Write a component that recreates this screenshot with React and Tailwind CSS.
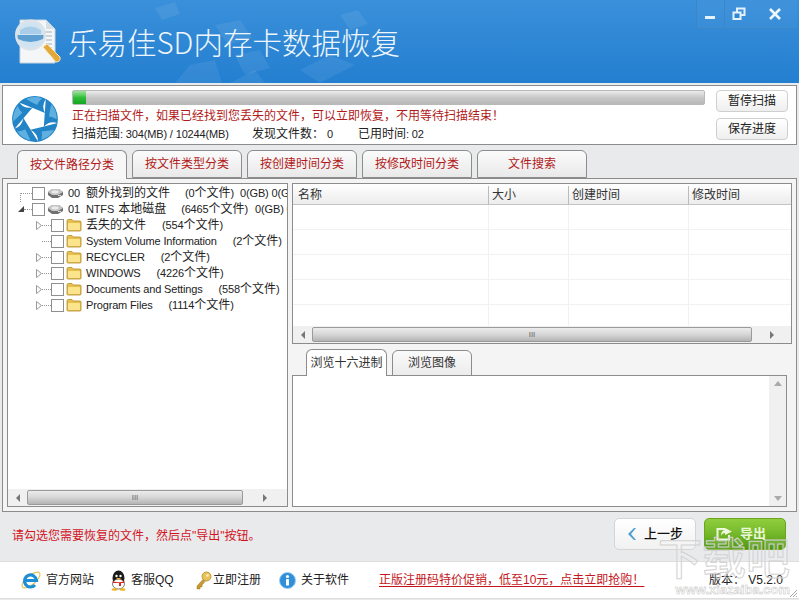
import React from 'react';

const FONT = '"Liberation Sans", "Noto Sans CJK SC", sans-serif';

const tabs = ['按文件路径分类', '按文件类型分类', '按创建时间分类', '按修改时间分类', '文件搜索'];

const folders = [
  { name: <Zh>丢失的文件</Zh>, n: 554, arrow: true },
  { name: 'System Volume Information', n: 2, arrow: false },
  { name: 'RECYCLER', n: 2, arrow: true },
  { name: 'WINDOWS', n: 4226, arrow: true },
  { name: 'Documents and Settings', n: 558, arrow: true },
  { name: 'Program Files', n: 1114, arrow: true },
];

// latin runs in the picture are narrower than the CJK ones, so CJK gets its own size
function Zh({ children }) {
  return <span className="text-[12px] tracking-normal">{children}</span>;
}

const Count = ({ n }) => (
  <span>({n}<Zh>个文件</Zh>)</span>
);

const DriveIcon = () => (
  <svg width="17" height="12" viewBox="0 0 17 12" className="shrink-0">
    <path d="M1 5 L5 2 H12 L16 5 V8 L11 11 H5 L1 8 Z" fill="#6f716f" />
    <path d="M1 5 L5 8 H11 L16 5 L12 2 H5 Z" fill="#c6c7c6" />
    <ellipse cx="8" cy="5" rx="3.5" ry="1.4" fill="#ececec" />
    <rect x="11" y="8" width="3" height="1" fill="#d8d8d8" />
  </svg>
);

const FolderIcon = () => (
  <svg width="16" height="14" viewBox="0 0 16 14" className="shrink-0">
    <path d="M1 3 Q1 1.5 2.5 1.5 H6 L7.5 3 H14 Q15 3 15 4 V12 Q15 13 14 13 H2 Q1 13 1 12 Z" fill="#e8bf4d" stroke="#b08a2a" strokeWidth="0.8" />
    <rect x="2" y="5" width="12" height="7" rx="1" fill="#fbe48c" />
  </svg>
);

const Checkbox = () => <span className="w-[13px] h-[13px] shrink-0 border border-[#8e8f8f] bg-white" />;

const ScrollArrow = ({ dir }) => (
  <svg width="6" height="8" viewBox="0 0 6 8" className={dir === 'left' ? 'rotate-180' : ''}>
    <path d="M1 0 L5 4 L1 8 Z" fill="#777" />
  </svg>
);

const HScrollbar = ({ thumb }) => (
  <div className="flex items-center bg-[#f0f0f0] h-[17px] shrink-0">
    <div className="w-[19px] flex justify-center"><ScrollArrow dir="left" /></div>
    <div className={`${thumb} h-[15px] border border-[#9a9a9a] rounded-[2px] bg-gradient-to-b from-[#ececec] via-[#d6d6d6] to-[#b4b4b4] flex items-center justify-center text-[8px] leading-none text-[#666]`}>
      III
    </div>
    <div className="flex-1 flex justify-center"><ScrollArrow dir="right" /></div>
  </div>
);

const SwirlLogo = () => (
  <svg width="48" height="48" viewBox="-24 -24 48 48">
    {[0, 72, 144, 216, 288].map(a => (
      <g key={a} transform={`rotate(${a})`}>
        <path d="M-16 -16.5 A23 23 0 0 1 11 -20 Q6 -14 10 -6 Q-2 -11 -16 -16.5 Z" fill="#2284c6" />
        <path d="M-9 -20 A21 21 0 0 1 7 -20.5 Q3 -17 2 -14 Q-4 -17 -9 -20 Z" fill="#5fb0e0" />
      </g>
    ))}
  </svg>
);

const Logo = () => (
  <svg width="46" height="46" viewBox="0 0 46 46" className="shrink-0">
    <path d="M5 1 H31 L40 10 V44 H5 Z" fill="#f4f6f8" stroke="#c7d3de" />
    <path d="M31 1 V10 H40 Z" fill="#d6dee6" />
    <path d="M30 13 H37 M31 17 H37 M31 21 H37 M31 25 H37 M31 29 H37" stroke="#a5b0ba" />
    <circle cx="15.5" cy="16" r="14" fill="#cfe4f3" stroke="#dbe3ea" strokeWidth="3" />
    <path d="M2.5 16 H28.5 A13 13 0 0 1 28 20 Q15 26 3 20 A13 13 0 0 1 2.5 16 Z" fill="#5c9fd0" />
    <path d="M5 11 Q15 4 26 11 V15 H5 Z" fill="#a9cde8" />
    <path d="M28 28 L32 25 L45 38 Q46 43 41 43 Z" fill="#e2a83a" stroke="#f6e3ab" />
  </svg>
);

const IeIcon = () => (
  <svg width="20" height="20" viewBox="0 0 20 20">
    <ellipse cx="10" cy="10" rx="11" ry="4.5" transform="rotate(-40 10 10)" fill="none" stroke="#e8c25a" strokeWidth="1.2" />
    <path d="M4.5 10.5 H15.5 A6 6 0 1 0 14 15" fill="none" stroke="#1d8fd6" strokeWidth="3.2" />
  </svg>
);

const QqIcon = () => (
  <svg width="19" height="21" viewBox="0 0 19 21">
    <ellipse cx="9.5" cy="8" rx="6" ry="7.5" fill="#1a1a1a" />
    <ellipse cx="9.5" cy="14" rx="6" ry="5" fill="#fff" stroke="#222" strokeWidth="0.6" />
    <circle cx="7.5" cy="6" r="1.2" fill="#fff" />
    <circle cx="11.5" cy="6" r="1.2" fill="#fff" />
    <path d="M7 8 H12 L9.5 10 Z" fill="#f2b01e" />
    <path d="M3.5 11 Q9.5 13.5 15.5 11 L15 13 H12 V16 H10 V13 H4 Z" fill="#d8281e" />
    <ellipse cx="5.5" cy="19.5" rx="3" ry="1.3" fill="#f2b01e" />
    <ellipse cx="13.5" cy="19.5" rx="3" ry="1.3" fill="#f2b01e" />
  </svg>
);

const KeyIcon = () => (
  <svg width="17" height="19" viewBox="0 0 17 19">
    <circle cx="11.5" cy="5.5" r="4.5" fill="#e8c35a" stroke="#b08a2a" strokeWidth="0.8" />
    <circle cx="12.5" cy="4.5" r="1.2" fill="#fff3c4" />
    <path d="M8 8.5 L2 15 L2 18 L5 18 L5 16 L7 16 L7 14 L10 10.5 Z" fill="#c99a32" stroke="#9a7420" strokeWidth="0.5" />
  </svg>
);

const InfoIcon = () => (
  <svg width="17" height="17" viewBox="0 0 17 17">
    <circle cx="8.5" cy="8.5" r="8" fill="#2f8fd8" stroke="#9fcdee" />
    <circle cx="8.5" cy="4.5" r="1.6" fill="#fff" />
    <rect x="7" y="7" width="3" height="6.5" rx="0.5" fill="#fff" />
  </svg>
);

const FooterLink = ({ icon, label, iconBox, textBox }) => (
  <div className="flex items-center">
    <span className={`${iconBox} flex justify-center`}>{icon}</span>
    <span className={`${textBox} text-[12px] text-[#222]`}>{label}</span>
  </div>
);

const App = () => {
  return (
    <div className="relative w-[799px] h-[600px] overflow-hidden bg-[#e9eaec] flex flex-col" style={{ fontFamily: FONT }}>
      {/* title bar */}
      <header className="relative h-[83px] shrink-0 bg-gradient-to-b from-[#3a90da] to-[#237fd0] flex items-center pl-[15px] overflow-hidden">
        <svg className="absolute left-[130px] top-0" width="300" height="83" viewBox="0 0 300 83">
          <g fill="#fff" fillOpacity="0.07">
            <path d="M25 8 L45 2 L50 14 L32 20 Z" />
            <path d="M85 25 L110 20 L122 38 L98 45 Z" />
            <path d="M210 15 L228 10 L238 24 L220 30 Z" />
            <path d="M60 65 L85 60 L92 83 L45 83 Z" />
            <path d="M105 55 L130 50 L140 68 L115 75 Z" />
            <path d="M100 83 L125 70 L135 83 Z" />
            <path d="M170 70 L200 55 L225 65 L190 83 Z" />
          </g>
        </svg>
        <Logo />
        <h1 className="relative ml-[7px] text-[29.5px] leading-none font-light font-['Noto_Sans_CJK_SC'] text-[#eef6fc]">乐易佳SD内存卡数据恢复</h1>
        <div className="absolute right-[2px] top-0 h-[29px] flex bg-white/[0.03] border-l border-b border-[#3d86c4]">
          <div className="w-[28px] border-r border-[#3d86c4] flex items-center justify-center">
            <span className="w-[10px] h-[3px] mt-[7px] -ml-[2px] bg-[#e6f2fb]" />
          </div>
          <div className="w-[28px] flex items-center justify-center">
            <svg width="14" height="14" viewBox="0 0 14 14" fill="none" stroke="#e6f2fb" strokeWidth="2">
              <rect x="5" y="1.5" width="7.5" height="6.5" />
              <rect x="1.5" y="5.5" width="7" height="6.5" fill="#2f88d4" />
            </svg>
          </div>
          <div className="w-[44px] flex items-center justify-center">
            <svg width="12" height="12" viewBox="0 0 12 12" stroke="#eef6fc" strokeWidth="2.6">
              <path d="M1 1 L11 11 M11 1 L1 11" />
            </svg>
          </div>
        </div>
      </header>

      {/* scan status */}
      <section className="mt-[2px] mx-[2px] h-[60px] shrink-0 border border-[#8c8c8c] bg-white flex">
        <div className="w-[69px] shrink-0 pl-[8px] pt-[9px]">
          <SwirlLogo />
        </div>
        <div className="w-[633px] pt-[4px]">
          <div className="h-[15px] border border-[#b9b9b9] rounded-[2px] bg-gradient-to-b from-[#ececec] via-[#c8c8c8] to-[#b8b8b8] overflow-hidden">
            <div className="w-[13px] h-full bg-gradient-to-b from-[#9ae59a] via-[#2fbf3a] to-[#12a51e]" />
          </div>
          <p className="mt-[3px] text-[12px] leading-[17px] text-[#b11a1a]">正在扫描文件，如果已经找到您丢失的文件，可以立即恢复，不用等待扫描结束！</p>
          <div className="mt-[1px] flex text-[11px] tracking-[-0.15px] leading-[17px] text-[#222]">
            <span className="w-[180px]"><Zh>扫描范围</Zh>: 304(MB) / 10244(MB)</span>
            <span className="w-[106px]"><Zh>发现文件数：</Zh> 0</span>
            <span><Zh>已用时间</Zh>: 02</span>
          </div>
        </div>
        <div className="ml-[11px] pt-[4px] flex flex-col gap-[6px]">
          <button className="w-[72px] h-[22px] border border-[#cfcfcf] rounded-[4px] bg-gradient-to-b from-white to-[#efefef] text-[12px] text-[#222]">暂停扫描</button>
          <button className="w-[72px] h-[22px] border border-[#cfcfcf] rounded-[4px] bg-gradient-to-b from-white to-[#efefef] text-[12px] text-[#222]">保存进度</button>
        </div>
      </section>

      {/* category tabs */}
      <nav className="mt-[5px] pl-[17px] h-[29px] shrink-0 flex gap-[5px] relative z-10">
        {tabs.map((tab, i) => (
          <div
            key={tab}
            className={`w-[110px] border border-[#8c8c8c] rounded-t-[6px] flex items-center justify-center text-[12px] text-[#b11a1a] ${
              i === 0 ? 'h-[29px] border-b-0 bg-[#f7f7f7]' : 'h-[28px] bg-gradient-to-b from-[#fbfbfb] to-[#e9e9e9]'
            }`}
          >
            {tab}
          </div>
        ))}
      </nav>

      {/* main panel */}
      <main className="mx-[2px] -mt-[1px] h-[334px] shrink-0 border border-[#8c8c8c] bg-[#f4f4f4] p-[4px] flex gap-[4px]">
        {/* tree */}
        <div className="w-[281px] shrink-0 border border-[#8c8c8c] bg-white flex flex-col">
          <div className="flex-1 pt-[1px] overflow-hidden text-[11px] tracking-[-0.15px] text-[#222] whitespace-nowrap">
            <div className="h-[16px] w-max flex items-center pl-[12px]">
              <span className="w-[12px] h-[9px] mt-[9px] border-l border-t border-dotted border-[#999] shrink-0" />
              <Checkbox />
              <span className="ml-[2px]"><DriveIcon /></span>
              <span className="ml-[4px] w-[18px]">00</span>
              <span><Zh>额外找到的文件</Zh></span>
              <span className="ml-[15px]"><Count n={0} /></span>
              <span className="ml-[6px]">0(GB) 0(G</span>
            </div>
            <div className="h-[16px] w-max flex items-center pl-[10px]">
              <svg width="6" height="6" viewBox="0 0 6 6" className="shrink-0"><path d="M0 6 L6 0 V6 Z" fill="#444" /></svg>
              <span className="w-[8px] border-t border-dotted border-[#999] shrink-0" />
              <Checkbox />
              <span className="ml-[2px]"><DriveIcon /></span>
              <span className="ml-[4px] w-[18px]">01</span>
              <span>NTFS</span>
              <span className="ml-[4px]"><Zh>本地磁盘</Zh></span>
              <span className="ml-[15px]"><Count n={6465} /></span>
              <span className="ml-[7px]">0(GB) 0</span>
            </div>
            {folders.map((f, i) => (
              <div key={i} className="h-[16px] w-max flex items-center pl-[28px]">
                <span className="w-[15px] shrink-0 flex items-center">
                  {f.arrow ? (
                    <svg width="6" height="9" viewBox="0 0 6 9" className="shrink-0"><path d="M0.5 0.5 L5.5 4.5 L0.5 8.5 Z" fill="#fff" stroke="#999" /></svg>
                  ) : (
                    <span className="w-[6px]" />
                  )}
                  <span className="w-[9px] border-t border-dotted border-[#999]" />
                </span>
                <Checkbox />
                <span className="ml-[2px]"><FolderIcon /></span>
                <span className="ml-[4px]">{f.name}</span>
                <span className="ml-[16px]"><Count n={f.n} /></span>
              </div>
            ))}
          </div>
          <HScrollbar thumb="w-[216px]" />
        </div>

        {/* file list + preview */}
        <div className="flex-1 flex flex-col min-w-0">
          <div className="h-[161px] shrink-0 border border-[#8c8c8c] bg-white flex flex-col">
            <div className="h-[21px] shrink-0 pt-[1px] flex text-[12px] text-[#333] bg-gradient-to-b from-white to-[#ececec] border-b border-[#c4c4c4] items-center">
              <div className="w-[196px] pl-[5px] border-r border-[#bbb]">名称</div>
              <div className="w-[80px] pl-[3px] border-r border-[#bbb]">大小</div>
              <div className="w-[120px] pl-[3px] border-r border-[#bbb]">创建时间</div>
              <div className="flex-1 pl-[3px]">修改时间</div>
            </div>
            <div className="flex-1 flex flex-col">
              {[0, 1, 2, 3, 4].map(row => (
                <div key={row} className={`flex ${row === 4 ? 'flex-1' : 'h-[25px] border-b border-[#f1f1f1]'}`}>
                  <div className="w-[196px] border-r border-[#f1f1f1]" />
                  <div className="w-[80px] border-r border-[#f1f1f1]" />
                  <div className="w-[120px] border-r border-[#f1f1f1]" />
                </div>
              ))}
            </div>
            <HScrollbar thumb="w-[440px]" />
          </div>

          <div className="h-[31px] shrink-0 pl-[14px] flex items-end gap-[5px] relative z-10">
            <div className="w-[81px] h-[27px] border border-[#8c8c8c] border-b-0 rounded-t-[6px] bg-white flex items-center justify-center text-[12px] text-[#333] -mb-[1px]">浏览十六进制</div>
            <div className="w-[80px] h-[26px] border border-[#8c8c8c] rounded-t-[6px] bg-gradient-to-b from-[#fafafa] to-[#ececec] flex items-center justify-center text-[12px] text-[#333] -mb-[1px]">浏览图像</div>
          </div>

          <div className="flex-1 mr-[5px] border border-[#8c8c8c] bg-white flex justify-end">
            <div className="w-[17px] bg-[#f0f0f0] flex flex-col items-center justify-between py-[5px]">
              <svg width="8" height="5" viewBox="0 0 8 5"><path d="M0 5 L4 0 L8 5 Z" fill="#aaa" /></svg>
              <svg width="8" height="5" viewBox="0 0 8 5"><path d="M0 0 L4 5 L8 0 Z" fill="#aaa" /></svg>
            </div>
          </div>
        </div>
      </main>

      {/* action row */}
      <div className="h-[49px] shrink-0 flex items-start pt-[6px] pl-[12px] pr-[13px]">
        <p className="flex-1 mt-[9px] text-[12px] text-[#d2141e]">请勾选您需要恢复的文件，然后点"导出"按钮。</p>
        <button className="w-[82px] h-[32px] border border-[#d5d5d5] rounded-[5px] bg-gradient-to-b from-white to-[#f1f1f1] flex items-center text-[13px] font-medium text-[#111] pl-[13px]">
          <svg width="8" height="12" viewBox="0 0 8 12"><path d="M6 0 L8 0 L3 6 L8 12 L6 12 L0 6 Z" fill="#4b9fd0" /></svg>
          <span className="ml-[8px]">上一步</span>
        </button>
        <button className="ml-[8px] w-[82px] h-[32px] border border-[#6aa51a] rounded-[5px] bg-gradient-to-b from-[#8fce3d] via-[#74b82a] to-[#4f960f] flex items-center text-[13px] font-bold text-[#e9f7d4] pl-[11px]">
          <svg width="17" height="14" viewBox="0 0 17 14" fill="none">
            <path d="M9 2 H1.5 V12.5 H13 V8" stroke="#eef8dc" strokeWidth="2" />
            <path d="M9 1 L16 4.5 L9 8 V6 Q6 6 5 9 Q5 3.5 9 3 Z" fill="#eef8dc" />
          </svg>
          <span className="ml-[7px]">导出</span>
        </button>
      </div>

      {/* footer */}
      <footer className="h-[38px] shrink-0 bg-white border-t border-b border-[#dedede] flex items-center pl-[21px]">
        <FooterLink icon={<IeIcon />} label="官方网站" iconBox="w-[20px]" textBox="ml-[5px] w-[62px]" />
        <FooterLink icon={<QqIcon />} label="客服QQ" iconBox="w-[20px]" textBox="ml-[3px] w-[64px]" />
        <FooterLink icon={<KeyIcon />} label="立即注册" iconBox="w-[17px]" textBox="ml-[1px] w-[66px]" />
        <FooterLink icon={<InfoIcon />} label="关于软件" iconBox="w-[17px]" textBox="ml-[5px] w-[78px]" />
        <span className="text-[12px] text-[#c4161c] underline underline-offset-2 w-[330px] whitespace-nowrap">正版注册码特价促销，低至10元，点击立即抢购！</span>
        <span className="text-[12px] text-[#222] whitespace-nowrap">版本： V5.2.0</span>
      </footer>

      {/* watermark */}
      <div className="absolute right-[9px] bottom-[3px] flex flex-col items-end pointer-events-none whitespace-nowrap">
        <span className="text-[44px] leading-[46px] font-medium text-white/15 [-webkit-text-stroke:1px_#d2d2d2]">下载吧</span>
        <span className="text-[13px] leading-[14px] font-bold text-white/30 [-webkit-text-stroke:0.5px_#c4c4c4]">www.xiazaiba.com</span>
      </div>
      {/* resize grip */}
      <svg className="absolute right-[1px] bottom-[2px]" width="9" height="9" viewBox="0 0 9 9" stroke="#aaa">
        <path d="M8 1 L1 8 M8 4 L4 8 M8 7 L7 8" />
      </svg>
    </div>
  );
};

export default App;
